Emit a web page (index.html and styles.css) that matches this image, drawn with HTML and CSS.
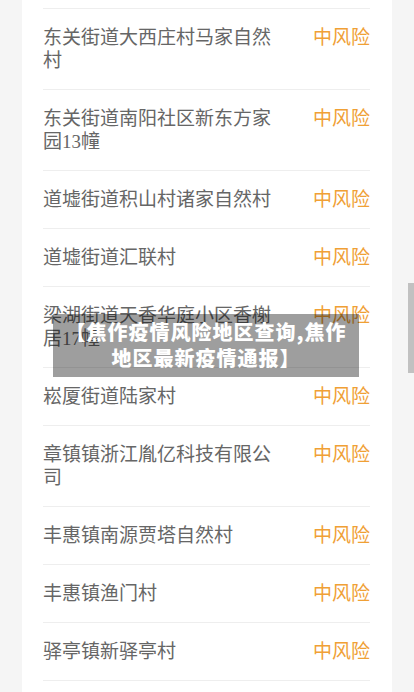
FILE: index.html
```html
<!DOCTYPE html>
<html lang="zh-CN">
<head>
<meta charset="utf-8">
<title>焦作疫情风险地区查询</title>
<link rel="stylesheet" href="styles.css">
</head>
<body>
<div class="card">
  <div class="top-slice"></div>
  <div class="row"><div class="name">东关街道大西庄村马家自然村</div><div class="risk">中风险</div></div>
  <div class="row"><div class="name">东关街道南阳社区新东方家园13幢</div><div class="risk">中风险</div></div>
  <div class="row"><div class="name">道墟街道积山村诸家自然村</div><div class="risk">中风险</div></div>
  <div class="row"><div class="name">道墟街道汇联村</div><div class="risk">中风险</div></div>
  <div class="row"><div class="name">梁湖街道天香华庭小区香榭居17幢</div><div class="risk">中风险</div></div>
  <div class="row"><div class="name">崧厦街道陆家村</div><div class="risk">中风险</div></div>
  <div class="row"><div class="name">章镇镇浙江胤亿科技有限公司</div><div class="risk">中风险</div></div>
  <div class="row"><div class="name">丰惠镇南源贾塔自然村</div><div class="risk">中风险</div></div>
  <div class="row"><div class="name">丰惠镇渔门村</div><div class="risk">中风险</div></div>
  <div class="row"><div class="name">驿亭镇新驿亭村</div><div class="risk">中风险</div></div>
  <div class="bottom-slice"></div>
</div>
<div class="banner">【焦作疫情风险地区查询,焦作地区最新疫情通报】</div>
<div class="scroll-thumb"></div>
</body>
</html>
```
FILE: styles.css
```css
html, body {
  margin: 0;
  padding: 0;
  height: 692px;
  overflow: hidden;
  background: #f5f5f5;
}
body {
  font-family: "Liberation Serif", "Noto Sans CJK SC", sans-serif;
}
.card {
  margin-left: 22px;
  width: 370px;
  box-sizing: border-box;
  padding: 0 22px 0 21px;
  background: #fff;
}
.top-slice {
  height: 8px;
  border-bottom: 1px solid #eeeeee;
}
.bottom-slice {
  height: 20px;
}
.row {
  display: flex;
  justify-content: space-between;
  align-items: flex-start;
  padding: 17px 0;
  border-bottom: 1px solid #eeeeee;
  font-size: 19px;
  line-height: 23px;
}
.name {
  width: 240px;
  color: #666;
}
.risk {
  color: #f0a035;
  white-space: nowrap;
}
.banner {
  position: absolute;
  left: 53px;
  top: 314px;
  width: 306px;
  box-sizing: border-box;
  padding: 5px 10px 6px;
  background: rgba(0, 0, 0, 0.38);
  color: #fff;
  font-family: "Noto Sans CJK SC", sans-serif;
  font-weight: 900;
  font-size: 20px;
  letter-spacing: 1px;
  line-height: 26px;
  text-align: center;
}
.scroll-thumb {
  position: absolute;
  right: 0;
  top: 283px;
  width: 6px;
  height: 90px;
  background: #c1c1c1;
}
```
